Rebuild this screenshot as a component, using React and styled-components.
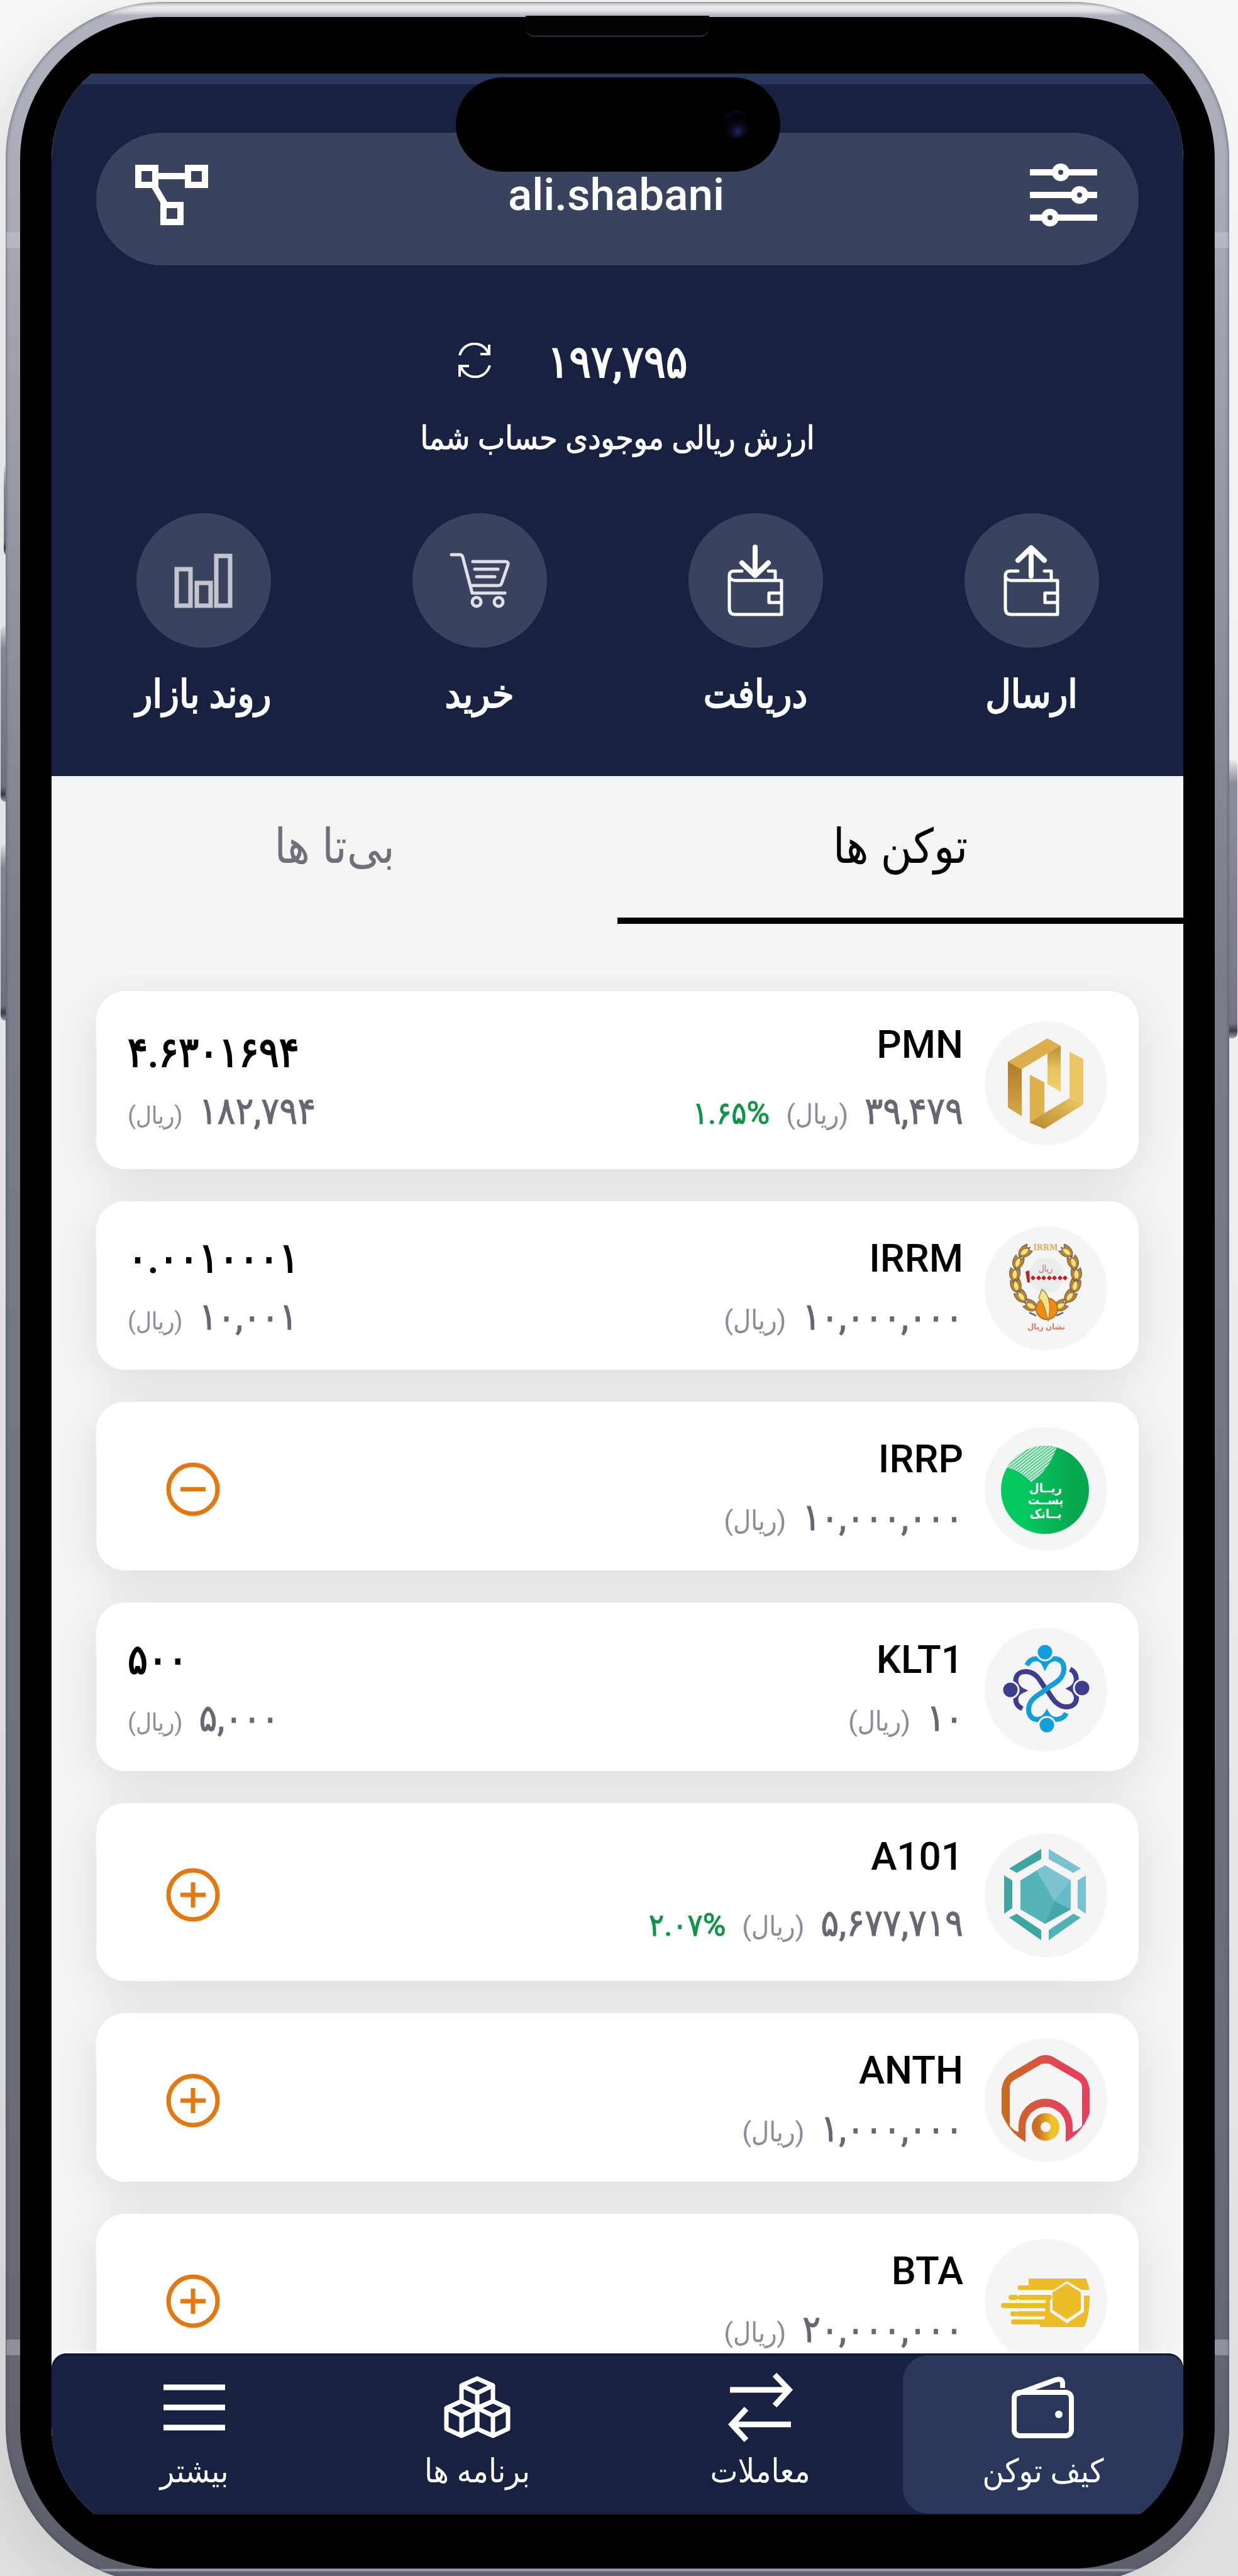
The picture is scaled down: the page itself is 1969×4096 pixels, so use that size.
import React from "react";
import styled, { createGlobalStyle } from "styled-components";

const GlobalStyle = createGlobalStyle`
  *, *::before, *::after { box-sizing: border-box; }
  html, body, #root { height: 100%; }
  body {
    margin: 0;
    overflow: hidden;
    font-family: Roboto, "DejaVu Sans Condensed", "DejaVu Sans", sans-serif;
    color: #000;
  }
  button {
    padding: 0;
    border: 0;
    background: none;
    color: inherit;
    font: inherit;
    cursor: pointer;
  }
  svg { display: block; flex: none; }
`;

/* ---------- device ---------- */

const Stage = styled.main`
  height: 100vh;
  padding: 3px 14px 0 9px;
  overflow: hidden;
  background: linear-gradient(180deg, #f7f7f7 0%, #f1f1f1 45%, #e0e0e0 100%);
`;

const Phone = styled.div`
  position: relative;
  height: calc(100vh + 9px);
  padding: 24px 23px;
  border-radius: 250px;
  background: linear-gradient(
    180deg,
    #c6c7cf 0,
    #ededee 8px,
    #e2e2e6 14px,
    #b0b2be 22px,
    #a9abb8 300px,
    #9699a5 800px,
    #7b7e8b 1500px,
    #717582 2400px,
    #676a75 3600px,
    #5d606b calc(100% - 24px),
    #a9acb8 calc(100% - 22px),
    #60636e calc(100% - 18px),
    #60636e 100%
  );
  box-shadow: inset 0 0 5px 1px rgba(58, 62, 80, 0.55), -30px 20px 70px rgba(0, 0, 0, 0.08);
`;

const SideButton = styled.span`
  position: absolute;
  z-index: -1;
  top: ${(p) => p.$top}px;
  ${(p) => (p.$side === "left" ? "left" : "right")}: -${(p) => p.$out}px;
  width: 20px;
  height: ${(p) => p.$height}px;
  border-radius: 8px;
  background: linear-gradient(180deg, #e8e8ea 0, #8d909c 36px, #74778a calc(100% - 24px), #3c3e48 calc(100% - 12px), #a6a8b0 100%);
`;

const PhoneWrap = styled.div`
  position: relative;
  z-index: 0;
`;

const Antenna = styled.span`
  position: absolute;
  top: ${(p) => p.$top};
  ${(p) => (p.$side === "left" ? "left" : "right")}: 1px;
  width: 22px;
  height: 25px;
  background: rgba(205, 208, 220, 0.4);
`;

const Bezel = styled.div`
  position: relative;
  height: 100%;
  padding: 50px;
  border-radius: 226px;
  background: #000;
`;

const Earpiece = styled.span`
  position: absolute;
  top: -2px;
  left: 50%;
  width: 292px;
  height: 34px;
  margin-left: -146px;
  border-bottom: 3px solid #24252c;
  border-radius: 0 0 14px 14px;
  background: #030304;
`;

const Glass = styled.div`
  height: 100%;
  padding: 40px 0 37px;
  overflow: hidden;
  border-radius: 176px;
  background: #000;
`;

const Island = styled.div`
  position: absolute;
  z-index: 3;
  top: 96px;
  left: 50%;
  display: flex;
  align-items: center;
  justify-content: flex-end;
  width: 516px;
  height: 150px;
  margin-left: -257px;
  padding-right: 48px;
  border-radius: 75px;
  background: #000;
`;

const Lens = styled.span`
  width: 44px;
  height: 44px;
  border-radius: 50%;
  background: radial-gradient(circle at 55% 75%, #23285c 0, #0b0e2c 20%, #040509 40%, #000 60%, #080b22 80%, #000 100%);
`;

/* ---------- app ---------- */

const Screen = styled.div`
  display: flex;
  flex-direction: column;
  height: 100%;
  background: #f5f5f5;
  direction: rtl;
`;

const StatusStrip = styled.div`
  flex: none;
  height: 17px;
  background: #2b375a;
`;

const Header = styled.header`
  flex: none;
  padding: 77px 71px 90px;
  background: #182240;
  color: #fff;
  text-align: center;
`;

const Pill = styled.div`
  display: grid;
  grid-template-columns: 1fr auto 1fr;
  align-items: center;
  height: 211px;
  padding: 0 66px 14px 62px;
  border-radius: 106px;
  background: #3a435e;
`;

const PillButton = styled.button`
  justify-self: ${(p) => p.$edge};
`;

const Account = styled.h1`
  margin: 0;
  font-size: 71px;
  line-height: 90px;
  font-weight: 500;
`;

const Balance = styled.div`
  display: grid;
  grid-template-columns: 1fr auto 1fr;
  column-gap: 90px;
  align-items: center;
  margin-top: 106px;
  direction: ltr;
`;

const RefreshButton = styled.button`
  justify-self: end;
  padding-bottom: 6px;
`;

const BalanceValue = styled.strong`
  font-size: 72px;
  line-height: 96px;
  font-weight: 400;
  -webkit-text-stroke: 2px currentColor;
`;

const BalanceNote = styled.p`
  margin: 37px 0 83px;
  font-size: 51px;
  line-height: 72px;
  -webkit-text-stroke: 1px currentColor;
`;

const Actions = styled.div`
  display: grid;
  grid-template-columns: repeat(4, 1fr);
  margin: 0 -49px;
`;

const Action = styled.button`
  display: flex;
  flex-direction: column;
  align-items: center;
  gap: 34px;
  font-size: 62px;
  line-height: 80px;
  -webkit-text-stroke: 2px currentColor;
`;

const ActionCircle = styled.span`
  display: flex;
  align-items: center;
  justify-content: center;
  width: 214px;
  height: 214px;
  border-radius: 50%;
  background: #3a435e;
`;

const Tabs = styled.div`
  display: grid;
  flex: none;
  grid-template-columns: 1fr 1fr;
  padding-bottom: 81px;
`;

const Tab = styled.button`
  padding: 62px 0 63px;
  border-bottom: 10px solid ${(p) => (p.$active ? "#000" : "transparent")};
  color: ${(p) => (p.$active ? "#000" : "#6f707a")};
  font-size: 76px;
  line-height: 100px;
`;

const TokenList = styled.ul`
  display: flex;
  flex: 1 1 0;
  flex-direction: column;
  gap: 51px;
  min-height: 0;
  margin: 0 0 -30px;
  padding: 26px 71px 30px;
  overflow: hidden;
  list-style: none;
`;

const Card = styled.li`
  display: flex;
  flex: none;
  align-items: center;
  padding: 40px 50px 31px;
  border-radius: 46px;
  background: #fff;
  box-shadow: 0 16px 80px rgba(0, 14, 8, 0.1);
`;

const LogoDisc = styled.span`
  flex: none;
  width: 195px;
  height: 197px;
  margin-left: 34px;
  border-radius: 50%;
  background: #f5f5f6;
`;

const Details = styled.div`
  display: flex;
  flex: 1;
  flex-direction: column;
  align-items: flex-start;
`;

const Holdings = styled(Details)`
  flex: none;
  align-items: flex-end;
`;

const Symbol = styled.h2`
  margin: 0;
  font-size: 62px;
  line-height: 89px;
  font-weight: 500;
`;

const Quantity = styled.span`
  font-size: 66px;
  line-height: 89px;
  direction: ltr;
  -webkit-text-stroke: 2px currentColor;
`;

const PriceRow = styled.div`
  display: flex;
  align-items: baseline;
  gap: 26px;
  height: ${(p) => (p.$tall ? 123 : 97)}px;
  color: #666771;
  font-size: 60px;
  line-height: ${(p) => (p.$tall ? 123 : 97)}px;
  -webkit-text-stroke: 1px currentColor;
`;

const Unit = styled.span`
  color: #8a8b96;
  font-size: ${(p) => (p.$small ? 38 : 43)}px;
  -webkit-text-stroke: 0;
`;

const Change = styled.span`
  color: #109447;
  font-size: 50px;
  direction: ltr;
`;

const ToggleButton = styled.button`
  margin-left: 61px;
`;

const Nav = styled.nav`
  position: relative;
  display: grid;
  flex: none;
  grid-template-columns: repeat(4, 1fr);
  height: 255px;
  border-radius: 24px 24px 0 0;
  background: #182240;
  box-shadow: 0 -2px 4px rgba(255, 255, 255, 0.9), inset 0 4px 0 #101937;
`;

const NavLink = styled.a`
  display: flex;
  flex-direction: column;
  align-items: center;
  gap: 16px;
  margin: 3px 0 0 4px;
  padding-top: 29px;
  border-radius: 40px 24px 0 40px;
  background: ${(p) => (p.$active ? "#2b375a" : "transparent")};
  color: #fff;
  font-size: 52px;
  line-height: 64px;
  text-decoration: none;
`;

const NavIcon = styled.span`
  display: flex;
  align-items: center;
  height: 108px;
`;

/* ---------- icons ---------- */

const Line = ({ w, h, stroke = "#fff", width = 8, children }) => (
  <svg width={w} height={h} viewBox={`0 0 ${w} ${h}`} fill="none" stroke={stroke} strokeWidth={width} aria-hidden="true">
    {children}
  </svg>
);

const NodesIcon = () => (
  <Line w={117} h={96} width={10}>
    <rect x="5" y="5" width="27" height="27" />
    <rect x="84" y="5" width="27" height="27" />
    <rect x="45" y="64" width="27" height="27" />
    <path d="M36 18H80M31 35L47 62" />
  </Line>
);

const SlidersIcon = () => (
  <Line w={107} h={102} width={10}>
    <path d="M0 15H38M60 15H107M0 51H69M89 51H107M0 87H22M42 87H107" />
    <circle cx="49" cy="15" r="9" />
    <circle cx="79" cy="51" r="9" />
    <circle cx="32" cy="87" r="9" />
  </Line>
);

const RefreshIcon = () => (
  <Line w={52} h={56} width={4}>
    <path d="M2 20C9 -4 40 -4 48 17M35 18H49V3" />
    <path d="M50 36C43 60 12 60 4 38M2 54V37H17" />
  </Line>
);

const ChartIcon = () => (
  <Line w={94} h={87} width={7} stroke="#c3c5ce">
    <rect x="4" y="25" width="22" height="58" />
    <rect x="36" y="47" width="22" height="36" />
    <rect x="67" y="4" width="22" height="79" />
  </Line>
);

const CartIcon = () => (
  <Line w={96} h={88} width={5} stroke="#dfe0e6">
    <g strokeLinecap="round" strokeLinejoin="round">
      <path d="M3 3H16Q20 3 21 7L36 64H88" />
      <path d="M37 14H89Q94 14 93 19L83 48Q82 52 78 52H34M40 26H77M43 38H72" />
    </g>
    <circle cx="43" cy="78" r="7" />
    <circle cx="78" cy="78" r="7" />
  </Line>
);

const WalletFlow = ({ up }) => (
  <Line w={90} h={114} width={5}>
    <g strokeLinejoin="round" strokeLinecap="round">
      <path d="M23 42H11Q3 42 3 49Q3 56 12 57H86V111H12Q3 111 3 101V49M65 42H76V56M86 77H66V92H86" />
      <path strokeWidth="8" d={up ? "M44 50V5M23 25L44 5L65 25" : "M44 4V49M23 29L44 49L65 29"} />
    </g>
  </Line>
);

const WalletIcon = () => (
  <Line w={100} h={99}>
    <rect x="4" y="25" width="91" height="69" rx="9" />
    <path d="M7 28L70 5Q80 2 81 10V18" strokeLinejoin="round" />
    <circle cx="75" cy="60" r="6" fill="#fff" stroke="none" />
  </Line>
);

const SwapIcon = () => (
  <Line w={103} h={110} width={9}>
    <path d="M3 27H96M74 3L97 27L74 52M100 82H6M29 57L6 82L29 107" />
  </Line>
);

const CubesIcon = () => (
  <Line w={106} h={100} width={7}>
    <g strokeLinejoin="round">
      <path d="M53 4L78 15V40L53 51L28 40V15ZM28 15L53 27L78 15M53 27V51" />
      <path d="M28 40L53 51V84L28 95L4 84V51ZM4 51L28 63L53 51M28 63V95" />
      <path d="M78 40L102 51V84L78 95L53 84V51ZM53 51L78 63L102 51M78 63V95" />
    </g>
  </Line>
);

const MenuIcon = () => (
  <Line w={98} h={74} width={9}>
    <path d="M0 5H98M0 37H98M0 69H98" />
  </Line>
);

const ToggleIcon = ({ plus }) => (
  <Line w={86} h={88} width={7} stroke="#e5770f">
    <circle cx="43" cy="44" r="39" />
    <path d={plus ? "M23 44H63M43 24V64" : "M23 44H63"} />
  </Line>
);

/* ---------- token logos ---------- */

const Logo = ({ children }) => (
  <svg width="195" height="197" viewBox="0 0 195 197" aria-hidden="true">
    {children}
  </svg>
);

const PmnLogo = () => (
  <Logo>
    <defs>
      <linearGradient id="pmnDark" x1="0" y1="0" x2="0" y2="1">
        <stop offset="0" stopColor="#b07a2c" />
        <stop offset="1" stopColor="#d9a843" />
      </linearGradient>
      <linearGradient id="pmnLight" x1="0" y1="0" x2="0" y2="1">
        <stop offset="0" stopColor="#b98d35" />
        <stop offset="0.5" stopColor="#e6c35b" />
        <stop offset="1" stopColor="#f0d271" />
      </linearGradient>
      <linearGradient id="pmnFoot" x1="0" y1="1" x2="1" y2="0">
        <stop offset="0" stopColor="#b8862f" />
        <stop offset="1" stopColor="#edcb64" />
      </linearGradient>
    </defs>
    <path fill="url(#pmnDark)" d="M37 64L59 76V151L37 137Z" />
    <path fill="#dcae4b" d="M37 64L100 27L121 39L100 51L59 76Z" />
    <path fill="url(#pmnLight)" d="M100 51L121 39V112L100 100Z" />
    <path fill="#e9c863" d="M135 48L157 60V132L135 122Z" />
    <path fill="#ddb24c" d="M72 85L95 97V146L95 171L72 161Z" />
    <path fill="url(#pmnFoot)" d="M95 146L135 122L157 132L95 171L72 161Z" />
  </Logo>
);

const LEAVES = [
  [64, 40, 52],
  [53, 57, 20],
  [48, 76, 4],
  [50, 94, -12],
  [58, 111, -36],
  [73, 126, -62],
];

const Leaf = ({ x, y, turn }) => (
  <g transform={`translate(${x} ${y}) rotate(${turn})`}>
    <path d="M0 12C-9 8 -10 -2 -7 -10L-2 -6L0 -11L2 -6L7 -10C10 -2 9 8 0 12Z" fill="#b98428" stroke="#5d5a60" strokeWidth="1" />
    <path d="M0 8C-5 4 -4 -3 0 -7C4 -3 5 4 0 8Z" fill="#f5e28a" />
  </g>
);

const IrrmLogo = () => (
  <Logo>
    <circle cx="98" cy="78" r="28" fill="#e9eded" />
    {LEAVES.map(([x, y, turn]) => (
      <React.Fragment key={y}>
        <Leaf x={x} y={y} turn={turn} />
        <Leaf x={194 - x} y={y} turn={-turn} />
      </React.Fragment>
    ))}
    <text x="97" y="38" textAnchor="middle" fontFamily="Liberation Serif, serif" fontWeight="700" fontSize="14" fill="#e0ab55">
      IRRM
    </text>
    <text x="97" y="72" textAnchor="middle" fontSize="14" fill="#cf6a5c">
      ریال
    </text>
    <path d="M65 72L71 70L72 89L68 89Z" fill="#c01f26" />
    {[77, 86, 94, 103, 111, 120, 128].map((x) => (
      <path key={x} d={`M${x} 78L${x + 4} 82L${x} 86L${x - 4} 82Z`} fill="#c01f26" />
    ))}
    <path d="M71 137L82 142M125 137L114 142" stroke="#6b6a74" strokeWidth="3" />
    <circle cx="99" cy="131" r="17" fill="#f58a12" stroke="#a8762a" strokeWidth="2" />
    <path d="M91 100C104 108 106 130 101 151C98 140 96 122 86 114Z" fill="#f5e28a" stroke="#a8863a" strokeWidth="1.5" />
    <text x="98" y="164" textAnchor="middle" fontSize="13" fontWeight="700" fill="#d8806a">
      نشان ریال
    </text>
  </Logo>
);

const IrrpLogo = () => (
  <Logo>
    <defs>
      <linearGradient id="irrp">
        <stop offset="0.25" stopColor="#05c95f" />
        <stop offset="0.8" stopColor="#06a84f" />
      </linearGradient>
      <pattern id="irrpMesh" width="4" height="4" patternUnits="userSpaceOnUse" patternTransform="rotate(-38)">
        <rect width="4" height="4" fill="#4fc98a" />
        <rect width="4" height="2" fill="#d5f0e0" />
      </pattern>
      <clipPath id="irrpClip">
        <circle cx="96" cy="100" r="70" />
      </clipPath>
    </defs>
    <circle cx="96" cy="100" r="70" fill="url(#irrp)" />
    <path clipPath="url(#irrpClip)" d="M20 62Q52 64 74 88Q104 68 116 28V10H20Z" fill="url(#irrpMesh)" />
    <g fill="#fff" fontSize="20" fontWeight="700" textAnchor="middle">
      <text x="97" y="104">ریــال</text>
      <text x="97" y="123">پســت</text>
      <text x="97" y="145">بــانک</text>
    </g>
  </Logo>
);

const KLT_PATH =
  "M67 60C74 46 90 46 96 60C104 44 128 46 126 68C124 86 104 91 98 98C90 105 70 112 70 130C70 150 92 150 99 137C106 150 124 148 130 136";

const KltLogo = () => (
  <Logo>
    <g fill="none" strokeWidth="8">
      <path d={KLT_PATH} stroke="#3f3d8f" transform="rotate(-90 98 98)" />
      <path d={KLT_PATH} stroke="#119edb" />
    </g>
    <g stroke="#f5f5f6" strokeWidth="3">
      <circle cx="96" cy="39" r="13" fill="#119edb" />
      <circle cx="99" cy="155" r="13" fill="#119edb" />
      <circle cx="41" cy="99" r="13" fill="#3f3d8f" />
      <circle cx="155" cy="96" r="13" fill="#3f3d8f" />
    </g>
  </Logo>
);

const A101Logo = () => (
  <Logo>
    <path fill="#3ea6a0" d="M90 25V41L51 63L39 56ZM31 67L44 75V119L31 128ZM39 134L51 128L90 154V170Z" />
    <path fill="#7ac2d0" d="M102 25V41L141 63L153 56ZM161 67L148 75V119L161 128Z" />
    <path fill="#4fb3b5" d="M153 134L141 128L102 154V170Z" />
    <path fill="#55b4ba" d="M96 51L137 75V121L96 144L57 121V75Z" />
    <path fill="#7cc3d1" d="M96 51L137 75L111 108L83 60Z" />
    <path fill="#68bbc6" d="M137 75V121L111 108Z" />
    <path fill="#42a7a6" d="M111 108L137 121L96 144Z" />
  </Logo>
);

const AnthLogo = () => (
  <Logo>
    <defs>
      <linearGradient id="anth">
        <stop offset="0.1" stopColor="#cb6922" />
        <stop offset="0.7" stopColor="#e5425a" />
      </linearGradient>
      <linearGradient id="anthRing">
        <stop offset="0.1" stopColor="#cd6f22" />
        <stop offset="0.8" stopColor="#edc22b" />
      </linearGradient>
    </defs>
    <path
      fill="url(#anth)"
      d="M65 165Q38 149 27 119V81Q30 62 42 55L86 29Q97 24 108 29L152 55Q164 62 167 81V119Q156 149 129 165V141A32 32 0 0 0 65 141ZM54 149V139A43 43 0 0 1 140 139V149Q148 147 155 139V78Q155 71 149 67L104 41Q97 39 90 41L46 67Q40 71 40 78V139Q46 147 54 149Z"
    />
    <circle cx="97" cy="141" r="15" fill="none" stroke="url(#anthRing)" strokeWidth="14" />
  </Logo>
);

const BtaLogo = () => (
  <Logo>
    <g fill="#ecbd28">
      <path d="M70 63H161Q165 71 167 81H154L131 67L110 81H53V74H70Z" />
      <path d="M98 90H104V116L131 134L158 116V90H167Q167 125 158 140H88V132H95Z" />
      <path d="M131 71L153 85V113L131 128L108 113V85Z" />
    </g>
    <path d="M42 93H49M57 93H103M30 106H100M45 119H47M54 119H100M46 132H98" stroke="#ecbd28" strokeWidth="8" strokeLinecap="round" />
  </Logo>
);

/* ---------- data ---------- */

const ACTIONS = [
  { label: "ارسال", icon: <WalletFlow up /> },
  { label: "دریافت", icon: <WalletFlow /> },
  { label: "خرید", icon: <CartIcon /> },
  { label: "روند بازار", icon: <ChartIcon /> },
];

const TOKENS = [
  { symbol: "PMN", logo: <PmnLogo />, price: "۳۹,۴۷۹", change: "۱.۶۵%", quantity: "۴.۶۳۰۱۶۹۴", worth: "۱۸۲,۷۹۴" },
  { symbol: "IRRM", logo: <IrrmLogo />, price: "۱۰,۰۰۰,۰۰۰", quantity: "۰.۰۰۱۰۰۰۱", worth: "۱۰,۰۰۱" },
  { symbol: "IRRP", logo: <IrrpLogo />, price: "۱۰,۰۰۰,۰۰۰", toggle: "remove" },
  { symbol: "KLT1", logo: <KltLogo />, price: "۱۰", quantity: "۵۰۰", worth: "۵,۰۰۰" },
  { symbol: "A101", logo: <A101Logo />, price: "۵,۶۷۷,۷۱۹", change: "۲.۰۷%", toggle: "add" },
  { symbol: "ANTH", logo: <AnthLogo />, price: "۱,۰۰۰,۰۰۰", toggle: "add" },
  { symbol: "BTA", logo: <BtaLogo />, price: "۲۰,۰۰۰,۰۰۰", toggle: "add" },
];

const NAV = [
  { label: "کیف توکن", icon: <WalletIcon />, active: true },
  { label: "معاملات", icon: <SwapIcon /> },
  { label: "برنامه ها", icon: <CubesIcon /> },
  { label: "بیشتر", icon: <MenuIcon /> },
];

const Token = ({ symbol, logo, price, change, quantity, worth, toggle }) => (
  <Card>
    <LogoDisc>{logo}</LogoDisc>
    <Details>
      <Symbol>{symbol}</Symbol>
      <PriceRow $tall={Boolean(change)}>
        <bdi>{price}</bdi>
        <Unit>(ریال)</Unit>
        {change && <Change>{change}</Change>}
      </PriceRow>
    </Details>
    {toggle ? (
      <ToggleButton aria-label={toggle === "add" ? "افزودن" : "حذف"}>
        <ToggleIcon plus={toggle === "add"} />
      </ToggleButton>
    ) : (
      <Holdings>
        <Quantity>{quantity}</Quantity>
        <PriceRow>
          <bdi>{worth}</bdi>
          <Unit $small>(ریال)</Unit>
        </PriceRow>
      </Holdings>
    )}
  </Card>
);

export default function App() {
  return (
    <Stage>
      <GlobalStyle />
      <PhoneWrap>
        <SideButton $side="left" $out={3} $top={735} $height={146} />
        <SideButton $side="left" $out={8} $top={992} $height={280} />
        <SideButton $side="left" $out={8} $top={1340} $height={280} />
        <SideButton $side="right" $out={13} $top={1206} $height={442} />
        <Phone>
          <Antenna $side="left" $top="366px" />
          <Antenna $side="right" $top="366px" />
          <Antenna $side="left" $top="calc(100% - 388px)" />
          <Antenna $side="right" $top="calc(100% - 388px)" />
          <Bezel>
            <Earpiece />
            <Island>
              <Lens />
            </Island>
            <Glass>
              <Screen>
                <StatusStrip />
                <Header>
                  <Pill>
                    <PillButton $edge="start" aria-label="تنظیمات">
                      <SlidersIcon />
                    </PillButton>
                    <Account dir="ltr">ali.shabani</Account>
                    <PillButton $edge="end" aria-label="شبکه">
                      <NodesIcon />
                    </PillButton>
                  </Pill>
                  <Balance>
                    <RefreshButton aria-label="به‌روزرسانی">
                      <RefreshIcon />
                    </RefreshButton>
                    <BalanceValue>۱۹۷,۷۹۵</BalanceValue>
                  </Balance>
                  <BalanceNote>ارزش ریالی موجودی حساب شما</BalanceNote>
                  <Actions>
                    {ACTIONS.map((a) => (
                      <Action key={a.label}>
                        <ActionCircle>{a.icon}</ActionCircle>
                        {a.label}
                      </Action>
                    ))}
                  </Actions>
                </Header>
                <Tabs role="tablist">
                  <Tab role="tab" aria-selected="true" $active>
                    توکن ها
                  </Tab>
                  <Tab role="tab" aria-selected="false">
                    بی‌تا ها
                  </Tab>
                </Tabs>
                <TokenList>
                  {TOKENS.map((t) => (
                    <Token key={t.symbol} {...t} />
                  ))}
                </TokenList>
                <Nav>
                  {NAV.map((n) => (
                    <NavLink key={n.label} href="#" $active={n.active}>
                      <NavIcon>{n.icon}</NavIcon>
                      {n.label}
                    </NavLink>
                  ))}
                </Nav>
              </Screen>
            </Glass>
          </Bezel>
        </Phone>
      </PhoneWrap>
    </Stage>
  );
}
